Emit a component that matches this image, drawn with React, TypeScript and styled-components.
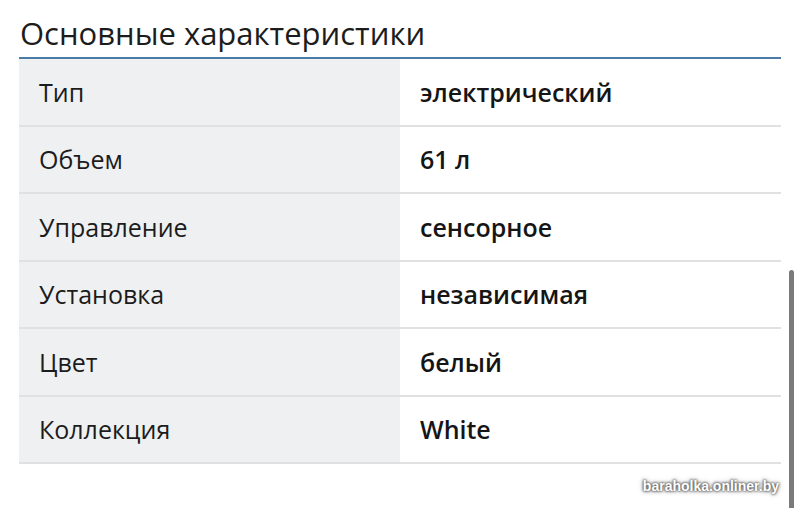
import styled, { createGlobalStyle } from 'styled-components'

const GlobalStyle = createGlobalStyle`
  html, body {
    margin: 0;
    padding: 0;
    background: #ffffff;
    overflow: hidden;
  }
  body {
    font-family: "Open Sans", "Noto Sans", "Liberation Sans", sans-serif;
    color: #1a1a1a;
  }
`

const Page = styled.div`
  position: relative;
  width: 800px;
  height: 508px;
  padding: 13px 19px 0 19px;
  box-sizing: border-box;
`

const Title = styled.h2`
  margin: 0;
  padding-left: 1px;
  font-weight: 400;
  font-size: 31px;
  line-height: 41px;
  color: #1c1c1c;
  border-bottom: 2px solid #4b7ca8;
  padding-bottom: 3px;
`

const Table = styled.div`
  display: flex;
  flex-direction: column;
`

const Row = styled.div`
  display: grid;
  grid-template-columns: 381px 1fr;
  height: 67.5px;
  border-bottom: 2px solid #e0e1e3;
  box-sizing: border-box;
`

const Label = styled.div`
  background: #eff0f2;
  display: flex;
  align-items: center;
  padding-left: 20px;
  font-size: 25px;
  color: #1c1c1c;
`

const Value = styled.div`
  display: flex;
  align-items: center;
  padding-left: 20px;
  font-size: 25px;
  font-weight: 600;
  color: #151515;
`

const Scrollbar = styled.div`
  position: absolute;
  right: 6px;
  top: 270px;
  width: 5px;
  height: 250px;
  border-radius: 3px;
  background: #7a7a7a;
`

const Watermark = styled.div`
  position: absolute;
  right: 21px;
  bottom: 14px;
  font-family: "Liberation Sans", "DejaVu Sans", sans-serif;
  font-weight: 700;
  font-size: 14px;
  color: #ffffff;
  text-shadow: 0 0 3px #555, 0 0 5px #777, 0 0 2px #444;
`

const rows = [
  ['Тип', 'электрический'],
  ['Объем', '61 л'],
  ['Управление', 'сенсорное'],
  ['Установка', 'независимая'],
  ['Цвет', 'белый'],
  ['Коллекция', 'White'],
]

export default function App() {
  return (
    <>
      <GlobalStyle />
      <Page>
        <Title>Основные характеристики</Title>
        <Table>
          {rows.map(([k, v]) => (
            <Row key={k}>
              <Label>{k}</Label>
              <Value>{v}</Value>
            </Row>
          ))}
        </Table>
        <Scrollbar />
        <Watermark>baraholka.onliner.by</Watermark>
      </Page>
    </>
  )
}
